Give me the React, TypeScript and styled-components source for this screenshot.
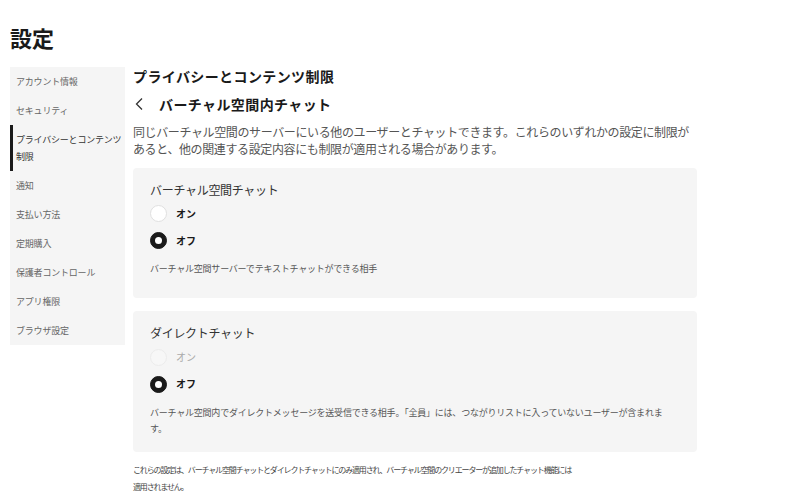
import styled, { createGlobalStyle } from "styled-components";

const GlobalStyle = createGlobalStyle`
	html, body {
		margin: 0;
		padding: 0;
		background: #ffffff;
	}
	body {
		font-family: "Noto Sans CJK JP", "Noto Sans", sans-serif;
		color: #222222;
	}
	* {
		box-sizing: border-box;
	}
`;

const menuItems = [
	"アカウント情報",
	"セキュリティ",
	"プライバシーとコンテンツ制限",
	"通知",
	"支払い方法",
	"定期購入",
	"保護者コントロール",
	"アプリ権限",
	"ブラウザ設定",
];

type Option = { label: string; checked: boolean; disabled?: boolean };

const settings: { title: string; options: Option[]; note: string; pad: number }[] = [
	{
		title: "バーチャル空間チャット",
		options: [
			{ label: "オン", checked: false },
			{ label: "オフ", checked: true },
		],
		note: "バーチャル空間サーバーでテキストチャットができる相手",
		pad: 21,
	},
	{
		title: "ダイレクトチャット",
		options: [
			{ label: "オン", checked: false, disabled: true },
			{ label: "オフ", checked: true },
		],
		note: "バーチャル空間内でダイレクトメッセージを送受信できる相手。「全員」には、つながりリストに入っていないユーザーが含まれます。",
		pad: 15,
	},
];

export default function App() {
	return (
		<StyledPage>
			<GlobalStyle />
			<StyledTitle>設定</StyledTitle>
			<StyledLayout>
				<StyledSidebar>
					{menuItems.map((item, i) => (
						<StyledMenuItem key={item} $active={i === 2}>
							{item}
						</StyledMenuItem>
					))}
				</StyledSidebar>
				<StyledMain>
					<StyledSectionTitle>プライバシーとコンテンツ制限</StyledSectionTitle>
					<StyledBackRow>
						<StyledBackButton aria-label="戻る">
							<svg width="11" height="14" viewBox="0 0 11 14" fill="none">
								<polyline points="8,1.5 2.5,7 8,12.5" stroke="#333" strokeWidth="1.3" />
							</svg>
						</StyledBackButton>
						<StyledPageTitle>バーチャル空間内チャット</StyledPageTitle>
					</StyledBackRow>
					<StyledDescription>
						同じバーチャル空間のサーバーにいる他のユーザーとチャットできます。これらのいずれかの設定に制限が
						<br />
						あると、他の関連する設定内容にも制限が適用される場合があります。
					</StyledDescription>
					{settings.map((s) => (
						<StyledCard key={s.title} $pb={s.pad}>
							<StyledCardTitle>{s.title}</StyledCardTitle>
							{s.options.map((o) => (
								<StyledRadioRow key={o.label}>
									<StyledRadio $checked={o.checked} $disabled={o.disabled} />
									<StyledRadioLabel $disabled={o.disabled}>{o.label}</StyledRadioLabel>
								</StyledRadioRow>
							))}
							<StyledNote>{s.note}</StyledNote>
						</StyledCard>
					))}
					<StyledFooter>
						これらの設定は、バーチャル空間チャットとダイレクトチャットにのみ適用され、バーチャル空間のクリエーターが追加したチャット機能には
						<br />
						適用されません。
					</StyledFooter>
				</StyledMain>
			</StyledLayout>
		</StyledPage>
	);
}

const StyledPage = styled.div`
	padding: 25px 0 0 10px;
	width: 800px;
	height: 499px;
	overflow: hidden;
`;

const StyledTitle = styled.h1`
	margin: 0;
	font-size: 22px;
	line-height: 24px;
	font-weight: 700;
	color: #1a1a1a;
`;

const StyledLayout = styled.div`
	display: flex;
	align-items: flex-start;
	gap: 8px;
	margin-top: 18px;
`;

const StyledSidebar = styled.nav`
	width: 115px;
	flex-shrink: 0;
	background-color: #f5f5f5;
	display: flex;
	flex-direction: column;
`;

const StyledMenuItem = styled.div<{ $active?: boolean }>`
	padding: 6px 0 6px 3px;
	border-left: 3px solid ${(p) => (p.$active ? "#1a1a1a" : "transparent")};
	font-size: 9px;
	letter-spacing: -0.2px;
	line-height: 17px;
	color: ${(p) => (p.$active ? "#333" : "#666")};
`;

const StyledMain = styled.main`
	width: 564px;
	flex-shrink: 0;
	display: flex;
	flex-direction: column;
`;

const StyledSectionTitle = styled.h2`
	margin: 0;
	font-size: 14px;
	letter-spacing: 0.4px;
	line-height: 18px;
	font-weight: 700;
	color: #1a1a1a;
`;

const StyledBackRow = styled.div`
	display: flex;
	align-items: center;
	gap: 12px;
	height: 20px;
	margin-top: 9px;
`;

const StyledBackButton = styled.span`
	display: flex;
	align-items: center;
	width: 14px;
	padding-left: 1px;
`;

const StyledPageTitle = styled.h3`
	margin: 0;
	font-size: 14px;
	letter-spacing: 0.4px;
	line-height: 20px;
	font-weight: 700;
	color: #1a1a1a;
`;

const StyledDescription = styled.p`
	margin: 8.5px 0 0;
	font-size: 12px;
	letter-spacing: -0.38px;
	line-height: 17px;
	white-space: nowrap;
	color: #555;
`;

const StyledCard = styled.section<{ $pb: number }>`
	margin-top: 11px;
	padding: 14px 20px ${(p) => p.$pb}px 17px;
	background-color: #f5f5f5;
	border-radius: 4px;
	& + & {
		margin-top: 13px;
	}
`;

const StyledCardTitle = styled.div`
	font-size: 12px;
	letter-spacing: -0.3px;
	line-height: 16px;
	color: #333;
	margin-bottom: 2.5px;
`;

const StyledRadioRow = styled.div`
	display: flex;
	align-items: center;
	gap: 9px;
	height: 27px;
`;

const StyledRadio = styled.span<{ $checked?: boolean; $disabled?: boolean }>`
	width: 17px;
	height: 17px;
	border-radius: 50%;
	flex-shrink: 0;
	background-color: ${(p) => (p.$checked ? "#1a1a1a" : p.$disabled ? "#f7f7f7" : "#fff")};
	border: 1px solid ${(p) => (p.$checked ? "#1a1a1a" : p.$disabled ? "#ececec" : "#e0e0e0")};
	display: flex;
	align-items: center;
	justify-content: center;
	&::after {
		content: "";
		width: 7px;
		height: 7px;
		border-radius: 50%;
		background: #fff;
		display: ${(p) => (p.$checked ? "block" : "none")};
	}
`;

const StyledRadioLabel = styled.span<{ $disabled?: boolean }>`
	font-size: 10px;
	line-height: 14px;
	font-weight: ${(p) => (p.$disabled ? 400 : 700)};
	color: ${(p) => (p.$disabled ? "#aaa" : "#1a1a1a")};
`;

const StyledNote = styled.p`
	margin: 7px 0 0;
	font-size: 9px;
	letter-spacing: -0.22px;
	line-height: 16px;
	color: #555;
`;

const StyledFooter = styled.p`
	margin: 9.5px 0 0;
	font-size: 8px;
	letter-spacing: -1.15px;
	line-height: 17px;
	white-space: nowrap;
	color: #444;
`;
